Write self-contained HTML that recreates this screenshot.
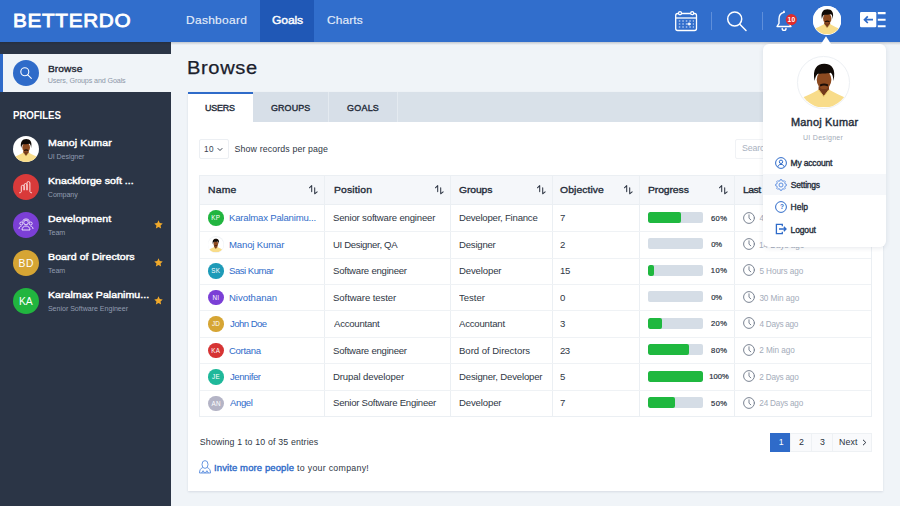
<!DOCTYPE html>
<html lang="en"><head><meta charset="utf-8"><title>Betterdo - Browse</title>
<style>
*{box-sizing:border-box;margin:0;padding:0}
html,body{width:900px;height:506px;overflow:hidden}
body{font-family:"Liberation Sans",sans-serif;background:#f0f4f8;color:#1f2733;position:relative}
.t{position:absolute;white-space:nowrap}
.b{position:absolute}
#hdr{left:0;top:0;width:900px;height:42px;background:#316ecc}
#act{left:259.5px;top:0;width:54.5px;height:42px;background:#2058b6}
#side{left:0;top:42px;width:171px;height:464px;background:#2b3546}
#brw{left:0;top:54px;width:171px;height:38.4px;background:#f0f4f8;border-left:3px solid #2f6bc9}
.circ{position:absolute;width:26px;height:26px;border-radius:50%}
#card{left:188px;top:92.4px;width:695px;height:399px;background:#fff;box-shadow:0 1px 2px rgba(40,60,90,.12)}
#tabs{left:188px;top:92.4px;width:695px;height:30px;background:#d9e1e9}
.tab{position:absolute;top:92.4px;height:30px;background:#d7dfe8;border-right:1px solid #e4eaf0}
#ton{left:188px;top:92px;width:65px;height:30.4px;background:#fff;border-top:2px solid #2f6bc9}
#tbl{left:199px;top:174.5px;width:673px;height:242px;border:1px solid #ebeff3;background:#fff}
#th{left:200px;top:175.5px;width:671px;height:29px;background:#f5f7fa;border-bottom:1px solid #ebeff3}
.vl{position:absolute;top:175.5px;width:1px;height:240px;background:#ebeff3}
.hl{position:absolute;left:200px;width:671px;height:1px;background:#eff2f5}
.av{position:absolute;width:15.5px;height:15.5px;border-radius:50%}
.bar{position:absolute;left:648.3px;width:54.4px;height:11px;border-radius:2px;background:#d5dde6;overflow:hidden}
.bar i{display:block;height:11px;background:#1fb83f;border-radius:2px}
.pg{position:absolute;top:432.5px;height:19.5px;border:1px solid #eef1f4;background:#f9fafc}
#dd{left:762.8px;top:43.5px;width:123px;height:203px;background:#fff;border-radius:6px;box-shadow:0 1px 5px rgba(30,50,80,.11)}
</style></head><body>

<div class="b" id="hdr"></div><div class="b" id="act"></div>
<div class="t" style="left:12.98px;top:9.09px;font-size:18.5px;line-height:24px;color:#fff;letter-spacing:0.613px;-webkit-text-stroke:0.8px #fff;transform:scaleX(1.12);transform-origin:0 0;">BETTERDO</div>
<div class="t" style="left:186.06px;top:12.82px;font-size:11.5px;line-height:15px;color:#e4edfa;letter-spacing:0.282px;-webkit-text-stroke:0.15px #e4edfa;transform:scaleX(1.04);transform-origin:0 0;">Dashboard</div>
<div class="t" style="left:271.62px;top:12.82px;font-size:11.5px;line-height:15px;color:#fff;letter-spacing:-0.15px;-webkit-text-stroke:0.4px #fff;transform:scaleX(1.06);transform-origin:0 0;">Goals</div>
<div class="t" style="left:326.83px;top:12.82px;font-size:11.5px;line-height:15px;color:#e4edfa;letter-spacing:0.089px;-webkit-text-stroke:0.15px #e4edfa;transform:scaleX(1.04);transform-origin:0 0;">Charts</div>
<svg class="t" style="left:674px;top:10px" width="24" height="22" viewBox="0 0 24 22" fill="none" stroke="#fff" stroke-width="1.3"><rect x="1.7" y="3.5" width="20.8" height="17" rx="2"/><path d="M1.7 8H22.5"/><circle cx="6" cy="3.2" r="1.5" fill="#316ecc"/><circle cx="18.2" cy="3.2" r="1.5" fill="#316ecc"/><g stroke="#a9c4ee" stroke-width="1.5" stroke-dasharray="1.5 2"><path d="M4.8 11H20"/><path d="M4.8 14H20"/><path d="M4.8 17H20"/></g><path d="M13.5 14h3.2M15.1 12.4v3.2" stroke-width="1.3"/></svg>
<div class="b" style="left:711px;top:12px;width:1px;height:18px;background:#5f8fda"></div>
<svg class="t" style="left:724.7px;top:9.3px" width="24" height="24" viewBox="0 0 24 24" fill="none" stroke="#fff" stroke-width="1.5" stroke-linecap="round"><circle cx="9.7" cy="10" r="7"/><path d="M14.8 15.2L21 21.5"/></svg>
<div class="b" style="left:762px;top:12px;width:1px;height:18px;background:#5f8fda"></div>
<svg class="t" style="left:775px;top:10px" width="24" height="22" viewBox="0 0 24 22" fill="none" stroke="#fff" stroke-width="1.4" stroke-linejoin="round" stroke-linecap="round"><path d="M9 2.4C5.3 3.1 4 6 4 9v4.3L2 16.5h14L14 13.3V11"/><path d="M7.2 18.5a1.9 1.9 0 0 0 3.8 0"/><path d="M9 1.2v1.2"/><circle cx="16.3" cy="9.6" r="5.6" fill="#e02b2b" stroke="none"/></svg>
<div class="t" style="left:787.5px;top:15.11px;font-size:6.6px;line-height:9px;color:#fff;letter-spacing:0.329px;font-weight:bold;">10</div>
<div class="b" style="left:812.8px;top:6.3px;width:28.3px;height:28.3px;border-radius:50%;background:#fff"></div>
<svg class="t" viewBox="0 0 40 40" width="28.3" height="28.3" style="left:812.8px;top:6.3px"><defs><clipPath id="pa"><circle cx="20" cy="20" r="20"/></clipPath></defs><circle cx="20" cy="20" r="20" fill="#ffffff"/><g clip-path="url(#pa)"><path d="M0 40 L0 33.5 C5 31 11 28.5 16 25.5 L24 25.5 C29 28.5 35 31 40 33.5 L40 40 Z" fill="#f8dc8a"/><path d="M15.8 23 L24.2 23 L24.2 25.5 L20 31 L15.8 25.5 Z" fill="#74391a"/><path d="M15.8 25.5 L20 31 L24.2 25.5" fill="none" stroke="#ecc96c" stroke-width="0.8"/><ellipse cx="20.2" cy="17.6" rx="5.9" ry="7.5" fill="#8c4a20"/><path d="M12.6 18.5 C10.6 9 14.5 4.6 20.3 4.6 C26.6 4.6 30 9 27.8 18.5 C27.6 15 27 13 25.6 11.8 C22 12.8 17.5 12.2 15.3 12.8 C13.7 13.8 13.2 16 12.6 18.5 Z" fill="#110b07"/><path d="M16.8 21.4 Q20.2 19.7 23.6 21.4 L23.2 22.9 Q20.2 21.5 17.2 22.9 Z" fill="#1c0e07"/></g></svg>
<svg class="t" style="left:860px;top:12px" width="26" height="16" viewBox="0 0 26 16"><rect x="0" y="0" width="16.3" height="15.3" rx="1.2" fill="#fff"/><path d="M4.5 7.7h8.5M7.8 4.4L4.5 7.7l3.3 3.3" stroke="#2f6bc9" stroke-width="1.7" fill="none"/><path d="M17.8 1.1H25.6M17.8 7.7H25.6M17.8 14.3H25.6" stroke="#fff" stroke-width="2.1"/></svg>
<div class="b" id="side"></div><div class="b" id="brw"></div>
<div class="b" style="left:0;top:42px;width:900px;height:3px;background:linear-gradient(rgba(10,20,40,.2),rgba(10,20,40,0))"></div>
<div class="circ" style="left:13px;top:60.2px;background:#2f6bc9"></div>
<svg class="t" style="left:19px;top:66.2px" width="14" height="14" viewBox="0 0 14 14" fill="none" stroke="#fff" stroke-width="1.1" stroke-linecap="round"><circle cx="5.8" cy="5.8" r="4"/><path d="M8.8 8.8L12.3 12.3"/></svg>
<div class="t" style="left:47.58px;top:61.97px;font-size:9.9px;line-height:13px;color:#1f2733;letter-spacing:0.086px;-webkit-text-stroke:0.35px #1f2733;transform:scaleX(1.03);transform-origin:0 0;">Browse</div>
<div class="t" style="left:47.65px;top:76.41px;font-size:7.2px;line-height:9px;color:#8d97a8;letter-spacing:-0.138px;">Users, Groups and Goals</div>
<div class="t" style="left:13.47px;top:108.16px;font-size:10.8px;line-height:14px;color:#fff;letter-spacing:-0.113px;font-weight:bold;transform:scaleX(0.9);transform-origin:0 0;">PROFILES</div>
<svg class="t" viewBox="0 0 40 40" width="26" height="26" style="left:13px;top:136px"><defs><clipPath id="pb"><circle cx="20" cy="20" r="20"/></clipPath></defs><circle cx="20" cy="20" r="20" fill="#ffffff"/><g clip-path="url(#pb)"><path d="M0 40 L0 33.5 C5 31 11 28.5 16 25.5 L24 25.5 C29 28.5 35 31 40 33.5 L40 40 Z" fill="#f8dc8a"/><path d="M15.8 23 L24.2 23 L24.2 25.5 L20 31 L15.8 25.5 Z" fill="#74391a"/><path d="M15.8 25.5 L20 31 L24.2 25.5" fill="none" stroke="#ecc96c" stroke-width="0.8"/><ellipse cx="20.2" cy="17.6" rx="5.9" ry="7.5" fill="#8c4a20"/><path d="M12.6 18.5 C10.6 9 14.5 4.6 20.3 4.6 C26.6 4.6 30 9 27.8 18.5 C27.6 15 27 13 25.6 11.8 C22 12.8 17.5 12.2 15.3 12.8 C13.7 13.8 13.2 16 12.6 18.5 Z" fill="#110b07"/><path d="M16.8 21.4 Q20.2 19.7 23.6 21.4 L23.2 22.9 Q20.2 21.5 17.2 22.9 Z" fill="#1c0e07"/></g></svg>
<div class="t" style="left:47.54px;top:136.1px;font-size:9.8px;line-height:13px;color:#fff;letter-spacing:0.078px;-webkit-text-stroke:0.45px #fff;transform:scaleX(1.08);transform-origin:0 0;">Manoj Kumar</div>
<div class="t" style="left:47.7px;top:152.74px;font-size:7.1px;line-height:9px;color:#919cb0;letter-spacing:-0.067px;">UI Designer</div>
<div class="circ" style="left:13px;top:174px;background:#d93a3a"></div>
<svg class="t" style="left:19px;top:179.8px" width="14" height="14" viewBox="0 0 14 14" fill="none" stroke="#fbdcdc" stroke-width="1" stroke-linecap="round" stroke-linejoin="round"><path d="M.6 12.8c1.3 0 1.7-.4 1.7-1.6V6.7a1.4 1.4 0 0 1 2.8 0V9.8M5.1 9.8V5a1.45 1.45 0 0 1 2.9 0V9.8M8 9.8V3a1.45 1.45 0 0 1 2.9 0v8.2c0 1.2.4 1.6 1.7 1.6"/></svg>
<div class="t" style="left:47.54px;top:174.1px;font-size:9.8px;line-height:13px;color:#fff;letter-spacing:0.021px;-webkit-text-stroke:0.45px #fff;transform:scaleX(1.08);transform-origin:0 0;">Knackforge soft ...</div>
<div class="t" style="left:47.85px;top:190.74px;font-size:7.1px;line-height:9px;color:#919cb0;letter-spacing:-0.073px;">Company</div>
<div class="circ" style="left:13px;top:212px;background:#7b3fd6"></div>
<svg class="t" style="left:18px;top:218px" width="16" height="14" viewBox="0 0 16 14" fill="none" stroke="#fff" stroke-width="0.8"><circle cx="8" cy="4.5" r="2.3"/><path d="M4 12c0-2.5 1.7-4 4-4s4 1.5 4 4z"/><circle cx="3.3" cy="5.5" r="1.5"/><circle cx="12.7" cy="5.5" r="1.5"/><path d="M1 11c0-1.8 1-2.8 2.5-2.8M15 11c0-1.8-1-2.8-2.5-2.8"/><path d="M4.5 3.5C5 1.5 6.5 1 8 1s3 .5 3.5 2.5"/></svg>
<div class="t" style="left:47.54px;top:212.1px;font-size:9.8px;line-height:13px;color:#fff;letter-spacing:0.077px;-webkit-text-stroke:0.45px #fff;transform:scaleX(1.08);transform-origin:0 0;">Development</div>
<div class="t" style="left:48.05px;top:228.74px;font-size:7.1px;line-height:9px;color:#919cb0;letter-spacing:-0.049px;">Team</div>
<svg class="t" style="left:153.8px;top:220.4px" width="9" height="9" viewBox="0 0 10 10"><path d="M5 .4l1.4 3 3.3.4-2.4 2.3.6 3.3L5 7.8 2.1 9.4l.6-3.3L.3 3.8l3.3-.4z" fill="#f0a92b"/></svg>
<div class="circ" style="left:13px;top:250px;background:#d6a534"></div>
<div class="t" style="left:18.6px;top:256.53px;font-size:10.3px;line-height:13px;color:#fff;letter-spacing:0.58px;">BD</div>
<div class="t" style="left:47.54px;top:250.1px;font-size:9.8px;line-height:13px;color:#fff;letter-spacing:0.074px;-webkit-text-stroke:0.45px #fff;transform:scaleX(1.08);transform-origin:0 0;">Board of Directors</div>
<div class="t" style="left:48.05px;top:266.74px;font-size:7.1px;line-height:9px;color:#919cb0;letter-spacing:-0.049px;">Team</div>
<svg class="t" style="left:153.8px;top:258.4px" width="9" height="9" viewBox="0 0 10 10"><path d="M5 .4l1.4 3 3.3.4-2.4 2.3.6 3.3L5 7.8 2.1 9.4l.6-3.3L.3 3.8l3.3-.4z" fill="#f0a92b"/></svg>
<div class="circ" style="left:13px;top:288px;background:#21b53f"></div>
<div class="t" style="left:19px;top:294.53px;font-size:10.3px;line-height:13px;color:#fff;letter-spacing:-0.12px;">KA</div>
<div class="t" style="left:47.54px;top:288.1px;font-size:9.8px;line-height:13px;color:#fff;letter-spacing:0.025px;-webkit-text-stroke:0.45px #fff;transform:scaleX(1.08);transform-origin:0 0;">Karalmax Palanimu...</div>
<div class="t" style="left:47.9px;top:304.74px;font-size:7.1px;line-height:9px;color:#919cb0;letter-spacing:-0.03px;">Senior Software Engineer</div>
<svg class="t" style="left:153.8px;top:296.4px" width="9" height="9" viewBox="0 0 10 10"><path d="M5 .4l1.4 3 3.3.4-2.4 2.3.6 3.3L5 7.8 2.1 9.4l.6-3.3L.3 3.8l3.3-.4z" fill="#f0a92b"/></svg>
<div class="t" style="left:186.53px;top:55.79px;font-size:18.8px;line-height:24px;color:#1a202c;letter-spacing:0.581px;-webkit-text-stroke:0.25px #1a202c;transform:scaleX(1.07);transform-origin:0 0;">Browse</div>
<div class="b" id="card"></div><div class="b" id="tabs"></div>
<div class="tab" style="left:253px;width:75.5px"></div><div class="tab" style="left:328.5px;width:69px"></div><div class="b" id="ton"></div>
<div class="t" style="left:204.93px;top:102.08px;font-size:9.3px;line-height:12px;color:#232b38;letter-spacing:-0.209px;-webkit-text-stroke:0.4px #232b38;transform:scaleX(0.96);transform-origin:0 0;">USERS</div>
<div class="t" style="left:270.77px;top:102.08px;font-size:9.3px;line-height:12px;color:#232b38;letter-spacing:0.109px;-webkit-text-stroke:0.4px #232b38;transform:scaleX(0.96);transform-origin:0 0;">GROUPS</div>
<div class="t" style="left:347.07px;top:102.08px;font-size:9.3px;line-height:12px;color:#232b38;letter-spacing:0.275px;-webkit-text-stroke:0.4px #232b38;transform:scaleX(0.96);transform-origin:0 0;">GOALS</div>
<div class="b" style="left:199px;top:139px;width:30px;height:20px;border:1px solid #eceff3;border-radius:2px;background:#fff"></div>
<div class="t" style="left:204px;top:144.16px;font-size:8.2px;line-height:11px;color:#3a4352;letter-spacing:0.39px;">10</div>
<svg class="t" style="left:217px;top:147px" width="6" height="5" viewBox="0 0 6 5" fill="none" stroke="#3a4352" stroke-width="1"><path d="M.7 1.2L3 3.5 5.3 1.2"/></svg>
<div class="t" style="left:234.6px;top:144.15px;font-size:8.8px;line-height:11px;color:#2f3745;letter-spacing:0.123px;">Show records per page</div>
<div class="b" style="left:734.7px;top:139px;width:138px;height:19.5px;border:1px solid #f0f2f5;border-radius:2px;background:#fff"></div>
<div class="t" style="left:742.1px;top:143.25px;font-size:8.8px;line-height:11px;color:#aab2bf;letter-spacing:-0.188px;">Search</div>
<div class="b" id="tbl"></div><div class="b" id="th"></div>
<div class="vl" style="left:324px"></div>
<div class="vl" style="left:450px"></div>
<div class="vl" style="left:552px"></div>
<div class="vl" style="left:639px"></div>
<div class="vl" style="left:734px"></div>
<div class="hl" style="top:231px"></div>
<div class="hl" style="top:258px"></div>
<div class="hl" style="top:284px"></div>
<div class="hl" style="top:310px"></div>
<div class="hl" style="top:337px"></div>
<div class="hl" style="top:363px"></div>
<div class="hl" style="top:390px"></div>
<div class="t" style="left:207.89px;top:183.87px;font-size:9.6px;line-height:12px;color:#232b38;letter-spacing:0.177px;-webkit-text-stroke:0.33px #232b38;transform:scaleX(1.08);transform-origin:0 0;">Name</div>
<svg class="t" style="left:309.3px;top:185px" width="9" height="10" viewBox="0 0 9 10" fill="none" stroke="#2f3745" stroke-width="1.05" stroke-linecap="round" stroke-linejoin="round"><path d="M2.7 6.6V.6L.4 2.8M5.7 2.8v6l2.4-1.9"/></svg>
<div class="t" style="left:333.59px;top:183.87px;font-size:9.6px;line-height:12px;color:#232b38;letter-spacing:0.154px;-webkit-text-stroke:0.33px #232b38;transform:scaleX(1.08);transform-origin:0 0;">Position</div>
<svg class="t" style="left:435.3px;top:185px" width="9" height="10" viewBox="0 0 9 10" fill="none" stroke="#2f3745" stroke-width="1.05" stroke-linecap="round" stroke-linejoin="round"><path d="M2.7 6.6V.6L.4 2.8M5.7 2.8v6l2.4-1.9"/></svg>
<div class="t" style="left:459.21px;top:183.87px;font-size:9.6px;line-height:12px;color:#232b38;letter-spacing:-0.109px;-webkit-text-stroke:0.33px #232b38;transform:scaleX(1.08);transform-origin:0 0;">Groups</div>
<svg class="t" style="left:537px;top:185px" width="9" height="10" viewBox="0 0 9 10" fill="none" stroke="#2f3745" stroke-width="1.05" stroke-linecap="round" stroke-linejoin="round"><path d="M2.7 6.6V.6L.4 2.8M5.7 2.8v6l2.4-1.9"/></svg>
<div class="t" style="left:560.21px;top:183.87px;font-size:9.6px;line-height:12px;color:#232b38;letter-spacing:0.08px;-webkit-text-stroke:0.33px #232b38;transform:scaleX(1.08);transform-origin:0 0;">Objective</div>
<svg class="t" style="left:623.7px;top:185px" width="9" height="10" viewBox="0 0 9 10" fill="none" stroke="#2f3745" stroke-width="1.05" stroke-linecap="round" stroke-linejoin="round"><path d="M2.7 6.6V.6L.4 2.8M5.7 2.8v6l2.4-1.9"/></svg>
<div class="t" style="left:648.19px;top:183.87px;font-size:9.6px;line-height:12px;color:#232b38;letter-spacing:-0.086px;-webkit-text-stroke:0.33px #232b38;transform:scaleX(1.08);transform-origin:0 0;">Progress</div>
<svg class="t" style="left:719.3px;top:185px" width="9" height="10" viewBox="0 0 9 10" fill="none" stroke="#2f3745" stroke-width="1.05" stroke-linecap="round" stroke-linejoin="round"><path d="M2.7 6.6V.6L.4 2.8M5.7 2.8v6l2.4-1.9"/></svg>
<div class="t" style="left:742.89px;top:183.87px;font-size:9.6px;line-height:12px;color:#232b38;letter-spacing:-0.437px;-webkit-text-stroke:0.33px #232b38;transform:scaleX(1.08);transform-origin:0 0;">Last</div>
<div class="av" style="left:208px;top:210.45px;background:#21b53f"></div>
<div class="t" style="left:211.3px;top:214.42px;font-size:6.3px;line-height:8px;color:#fff;letter-spacing:0.3px;">KP</div>
<div class="t" style="left:229.03px;top:212.28px;font-size:9.3px;line-height:12px;color:#2f6bc9;letter-spacing:-0.2px;transform:scaleX(1.03);transform-origin:0 0;">Karalmax Palanimu...</div>
<div class="t" style="left:333.39px;top:212.28px;font-size:9.3px;line-height:12px;color:#2f3745;letter-spacing:-0.17px;transform:scaleX(1.03);transform-origin:0 0;">Senior software engineer</div>
<div class="t" style="left:458.63px;top:212.28px;font-size:9.3px;line-height:12px;color:#2f3745;letter-spacing:-0.216px;transform:scaleX(1.03);transform-origin:0 0;">Developer, Finance</div>
<div class="t" style="left:560.34px;top:212.28px;font-size:9.3px;line-height:12px;color:#2f3745;letter-spacing:0px;transform:scaleX(1.03);transform-origin:0 0;">7</div>
<div class="bar" style="top:212px"><i style="width:32.7px"></i></div>
<div class="t" style="left:711.05px;top:213.57px;font-size:7.6px;line-height:10px;color:#2a3240;letter-spacing:0.348px;-webkit-text-stroke:0.2px #2a3240;">60%</div>
<svg class="t" style="left:742.5px;top:211.5px" width="12" height="12" viewBox="0 0 12 12" fill="none" stroke="#7a8392" stroke-width="1" stroke-linecap="round"><circle cx="6" cy="6" r="5.4"/><path d="M6 2.8v3.4l1.8 1.6"/></svg>
<div class="t" style="left:759.55px;top:213.16px;font-size:8.2px;line-height:11px;color:#a4acba;letter-spacing:-0.247px;">4 Days ago</div>
<div class="av" style="left:207.5px;top:236.4px;width:16.5px;height:16.5px;background:#eff2f5"></div>
<svg class="t" viewBox="0 0 40 40" width="15.5" height="15.5" style="left:208px;top:236.89999999999998px"><defs><clipPath id="pc"><circle cx="20" cy="20" r="20"/></clipPath></defs><circle cx="20" cy="20" r="20" fill="#ffffff"/><g clip-path="url(#pc)"><path d="M0 40 L0 33.5 C5 31 11 28.5 16 25.5 L24 25.5 C29 28.5 35 31 40 33.5 L40 40 Z" fill="#f8dc8a"/><path d="M15.8 23 L24.2 23 L24.2 25.5 L20 31 L15.8 25.5 Z" fill="#74391a"/><path d="M15.8 25.5 L20 31 L24.2 25.5" fill="none" stroke="#ecc96c" stroke-width="0.8"/><ellipse cx="20.2" cy="17.6" rx="5.9" ry="7.5" fill="#8c4a20"/><path d="M12.6 18.5 C10.6 9 14.5 4.6 20.3 4.6 C26.6 4.6 30 9 27.8 18.5 C27.6 15 27 13 25.6 11.8 C22 12.8 17.5 12.2 15.3 12.8 C13.7 13.8 13.2 16 12.6 18.5 Z" fill="#110b07"/><path d="M16.8 21.4 Q20.2 19.7 23.6 21.4 L23.2 22.9 Q20.2 21.5 17.2 22.9 Z" fill="#1c0e07"/></g></svg>
<div class="t" style="left:229.03px;top:238.73px;font-size:9.3px;line-height:12px;color:#2f6bc9;letter-spacing:-0.15px;transform:scaleX(1.03);transform-origin:0 0;">Manoj Kumar</div>
<div class="t" style="left:333.08px;top:238.73px;font-size:9.3px;line-height:12px;color:#2f3745;letter-spacing:-0.318px;transform:scaleX(1.03);transform-origin:0 0;">UI Designer, QA</div>
<div class="t" style="left:458.63px;top:238.73px;font-size:9.3px;line-height:12px;color:#2f3745;letter-spacing:-0.21px;transform:scaleX(1.03);transform-origin:0 0;">Designer</div>
<div class="t" style="left:560.34px;top:238.73px;font-size:9.3px;line-height:12px;color:#2f3745;letter-spacing:0px;transform:scaleX(1.03);transform-origin:0 0;">2</div>
<div class="bar" style="top:238.45px"><i style="width:0px"></i></div>
<div class="t" style="left:711.15px;top:240.02px;font-size:7.6px;line-height:10px;color:#2a3240;letter-spacing:-0.177px;-webkit-text-stroke:0.2px #2a3240;">0%</div>
<svg class="t" style="left:742.5px;top:237.95px" width="12" height="12" viewBox="0 0 12 12" fill="none" stroke="#7a8392" stroke-width="1" stroke-linecap="round"><circle cx="6" cy="6" r="5.4"/><path d="M6 2.8v3.4l1.8 1.6"/></svg>
<div class="t" style="left:759.1px;top:239.61px;font-size:8.2px;line-height:11px;color:#a4acba;letter-spacing:-0.083px;">14 Days ago</div>
<div class="av" style="left:208px;top:263.35px;background:#1e9bb8"></div>
<div class="t" style="left:211.3px;top:267.32px;font-size:6.3px;line-height:8px;color:#fff;letter-spacing:0.3px;">SK</div>
<div class="t" style="left:229.39px;top:265.18px;font-size:9.3px;line-height:12px;color:#2f6bc9;letter-spacing:-0.48px;transform:scaleX(1.03);transform-origin:0 0;">Sasi Kumar</div>
<div class="t" style="left:333.39px;top:265.18px;font-size:9.3px;line-height:12px;color:#2f3745;letter-spacing:-0.223px;transform:scaleX(1.03);transform-origin:0 0;">Software engineer</div>
<div class="t" style="left:458.63px;top:265.18px;font-size:9.3px;line-height:12px;color:#2f3745;letter-spacing:-0.138px;transform:scaleX(1.03);transform-origin:0 0;">Developer</div>
<div class="t" style="left:560.08px;top:265.18px;font-size:9.3px;line-height:12px;color:#2f3745;letter-spacing:-0.34px;transform:scaleX(1.03);transform-origin:0 0;">15</div>
<div class="bar" style="top:264.9px"><i style="width:6px"></i></div>
<div class="t" style="left:710.85px;top:266.47px;font-size:7.6px;line-height:10px;color:#2a3240;letter-spacing:0.448px;-webkit-text-stroke:0.2px #2a3240;">10%</div>
<svg class="t" style="left:742.5px;top:264.4px" width="12" height="12" viewBox="0 0 12 12" fill="none" stroke="#7a8392" stroke-width="1" stroke-linecap="round"><circle cx="6" cy="6" r="5.4"/><path d="M6 2.8v3.4l1.8 1.6"/></svg>
<div class="t" style="left:759.4px;top:266.06px;font-size:8.2px;line-height:11px;color:#a4acba;letter-spacing:-0.076px;">5 Hours ago</div>
<div class="av" style="left:208px;top:289.8px;background:#7b3fd6"></div>
<div class="t" style="left:212.48px;top:293.77px;font-size:6.3px;line-height:8px;color:#fff;letter-spacing:0.3px;">NI</div>
<div class="t" style="left:229.03px;top:291.63px;font-size:9.3px;line-height:12px;color:#2f6bc9;letter-spacing:-0.043px;transform:scaleX(1.03);transform-origin:0 0;">Nivothanan</div>
<div class="t" style="left:333.39px;top:291.63px;font-size:9.3px;line-height:12px;color:#2f3745;letter-spacing:-0.08px;transform:scaleX(1.03);transform-origin:0 0;">Software tester</div>
<div class="t" style="left:459.19px;top:291.63px;font-size:9.3px;line-height:12px;color:#2f3745;letter-spacing:-0.025px;transform:scaleX(1.03);transform-origin:0 0;">Tester</div>
<div class="t" style="left:560.44px;top:291.63px;font-size:9.3px;line-height:12px;color:#2f3745;letter-spacing:0px;transform:scaleX(1.03);transform-origin:0 0;">0</div>
<div class="bar" style="top:291.35px"><i style="width:0px"></i></div>
<div class="t" style="left:711.15px;top:292.92px;font-size:7.6px;line-height:10px;color:#2a3240;letter-spacing:-0.177px;-webkit-text-stroke:0.2px #2a3240;">0%</div>
<svg class="t" style="left:742.5px;top:290.85px" width="12" height="12" viewBox="0 0 12 12" fill="none" stroke="#7a8392" stroke-width="1" stroke-linecap="round"><circle cx="6" cy="6" r="5.4"/><path d="M6 2.8v3.4l1.8 1.6"/></svg>
<div class="t" style="left:759.4px;top:292.51px;font-size:8.2px;line-height:11px;color:#a4acba;letter-spacing:-0.073px;">30 Min ago</div>
<div class="av" style="left:208px;top:316.25px;background:#d6a534"></div>
<div class="t" style="left:211.88px;top:320.22px;font-size:6.3px;line-height:8px;color:#fff;letter-spacing:0.3px;">JD</div>
<div class="t" style="left:229.7px;top:318.08px;font-size:9.3px;line-height:12px;color:#2f6bc9;letter-spacing:-0.53px;transform:scaleX(1.03);transform-origin:0 0;">John Doe</div>
<div class="t" style="left:333.8px;top:318.08px;font-size:9.3px;line-height:12px;color:#2f3745;letter-spacing:-0.237px;transform:scaleX(1.03);transform-origin:0 0;">Accountant</div>
<div class="t" style="left:459.4px;top:318.08px;font-size:9.3px;line-height:12px;color:#2f3745;letter-spacing:-0.193px;transform:scaleX(1.03);transform-origin:0 0;">Accountant</div>
<div class="t" style="left:560.44px;top:318.08px;font-size:9.3px;line-height:12px;color:#2f3745;letter-spacing:0px;transform:scaleX(1.03);transform-origin:0 0;">3</div>
<div class="bar" style="top:317.8px"><i style="width:14px"></i></div>
<div class="t" style="left:711.05px;top:319.37px;font-size:7.6px;line-height:10px;color:#2a3240;letter-spacing:0.348px;-webkit-text-stroke:0.2px #2a3240;">20%</div>
<svg class="t" style="left:742.5px;top:317.3px" width="12" height="12" viewBox="0 0 12 12" fill="none" stroke="#7a8392" stroke-width="1" stroke-linecap="round"><circle cx="6" cy="6" r="5.4"/><path d="M6 2.8v3.4l1.8 1.6"/></svg>
<div class="t" style="left:759.55px;top:318.96px;font-size:8.2px;line-height:11px;color:#a4acba;letter-spacing:-0.302px;">4 Days ago</div>
<div class="av" style="left:208px;top:342.7px;background:#d63434"></div>
<div class="t" style="left:211.15px;top:346.67px;font-size:6.3px;line-height:8px;color:#fff;letter-spacing:0.3px;">KA</div>
<div class="t" style="left:229.34px;top:344.53px;font-size:9.3px;line-height:12px;color:#2f6bc9;letter-spacing:-0.314px;transform:scaleX(1.03);transform-origin:0 0;">Cortana</div>
<div class="t" style="left:333.39px;top:344.53px;font-size:9.3px;line-height:12px;color:#2f3745;letter-spacing:-0.223px;transform:scaleX(1.03);transform-origin:0 0;">Software engineer</div>
<div class="t" style="left:458.63px;top:344.53px;font-size:9.3px;line-height:12px;color:#2f3745;letter-spacing:-0.042px;transform:scaleX(1.03);transform-origin:0 0;">Bord of Directors</div>
<div class="t" style="left:560.34px;top:344.53px;font-size:9.3px;line-height:12px;color:#2f3745;letter-spacing:-0.59px;transform:scaleX(1.03);transform-origin:0 0;">23</div>
<div class="bar" style="top:344.25px"><i style="width:40.5px"></i></div>
<div class="t" style="left:711.1px;top:345.82px;font-size:7.6px;line-height:10px;color:#2a3240;letter-spacing:0.323px;-webkit-text-stroke:0.2px #2a3240;">80%</div>
<svg class="t" style="left:742.5px;top:343.75px" width="12" height="12" viewBox="0 0 12 12" fill="none" stroke="#7a8392" stroke-width="1" stroke-linecap="round"><circle cx="6" cy="6" r="5.4"/><path d="M6 2.8v3.4l1.8 1.6"/></svg>
<div class="t" style="left:759.3px;top:345.41px;font-size:8.2px;line-height:11px;color:#a4acba;letter-spacing:-0.063px;">2 Min ago</div>
<div class="av" style="left:208px;top:369.15px;background:#1fb89a"></div>
<div class="t" style="left:212.02px;top:373.12px;font-size:6.3px;line-height:8px;color:#fff;letter-spacing:0.3px;">JE</div>
<div class="t" style="left:229.7px;top:370.98px;font-size:9.3px;line-height:12px;color:#2f6bc9;letter-spacing:-0.433px;transform:scaleX(1.03);transform-origin:0 0;">Jennifer</div>
<div class="t" style="left:333.03px;top:370.98px;font-size:9.3px;line-height:12px;color:#2f3745;letter-spacing:-0.118px;transform:scaleX(1.03);transform-origin:0 0;">Drupal developer</div>
<div class="t" style="left:458.63px;top:370.98px;font-size:9.3px;line-height:12px;color:#2f3745;letter-spacing:-0.176px;transform:scaleX(1.03);transform-origin:0 0;">Designer, Developer</div>
<div class="t" style="left:560.44px;top:370.98px;font-size:9.3px;line-height:12px;color:#2f3745;letter-spacing:0px;transform:scaleX(1.03);transform-origin:0 0;">5</div>
<div class="bar" style="top:370.7px"><i style="width:54.4px"></i></div>
<div class="t" style="left:709.15px;top:372.27px;font-size:7.6px;line-height:10px;color:#2a3240;letter-spacing:0.057px;-webkit-text-stroke:0.2px #2a3240;">100%</div>
<svg class="t" style="left:742.5px;top:370.2px" width="12" height="12" viewBox="0 0 12 12" fill="none" stroke="#7a8392" stroke-width="1" stroke-linecap="round"><circle cx="6" cy="6" r="5.4"/><path d="M6 2.8v3.4l1.8 1.6"/></svg>
<div class="t" style="left:759.3px;top:371.86px;font-size:8.2px;line-height:11px;color:#a4acba;letter-spacing:-0.219px;">2 Days ago</div>
<div class="av" style="left:208px;top:395.6px;background:#b4b4c6"></div>
<div class="t" style="left:211.47px;top:399.57px;font-size:6.3px;line-height:8px;color:#fff;letter-spacing:0.3px;">AN</div>
<div class="t" style="left:229.8px;top:397.43px;font-size:9.3px;line-height:12px;color:#2f6bc9;letter-spacing:-0.404px;transform:scaleX(1.03);transform-origin:0 0;">Angel</div>
<div class="t" style="left:333.39px;top:397.43px;font-size:9.3px;line-height:12px;color:#2f3745;letter-spacing:-0.249px;transform:scaleX(1.03);transform-origin:0 0;">Senior Software Engineer</div>
<div class="t" style="left:458.63px;top:397.43px;font-size:9.3px;line-height:12px;color:#2f3745;letter-spacing:-0.138px;transform:scaleX(1.03);transform-origin:0 0;">Developer</div>
<div class="t" style="left:560.34px;top:397.43px;font-size:9.3px;line-height:12px;color:#2f3745;letter-spacing:0px;transform:scaleX(1.03);transform-origin:0 0;">7</div>
<div class="bar" style="top:397.15px"><i style="width:27px"></i></div>
<div class="t" style="left:711.1px;top:398.72px;font-size:7.6px;line-height:10px;color:#2a3240;letter-spacing:0.323px;-webkit-text-stroke:0.2px #2a3240;">50%</div>
<svg class="t" style="left:742.5px;top:396.65px" width="12" height="12" viewBox="0 0 12 12" fill="none" stroke="#7a8392" stroke-width="1" stroke-linecap="round"><circle cx="6" cy="6" r="5.4"/><path d="M6 2.8v3.4l1.8 1.6"/></svg>
<div class="t" style="left:759.3px;top:398.31px;font-size:8.2px;line-height:11px;color:#a4acba;letter-spacing:-0.203px;">24 Days ago</div>
<div class="t" style="left:199.8px;top:436.75px;font-size:8.8px;line-height:11px;color:#2f3745;letter-spacing:0.161px;">Showing 1 to 10 of 35 entries</div>
<svg class="t" style="left:199px;top:460px" width="12" height="14" viewBox="0 0 12 14" fill="none" stroke="#4f85dc" stroke-width="0.85" stroke-linejoin="round"><ellipse cx="6" cy="4.5" rx="3" ry="3.9"/><path d="M3.7 7.6C1.7 8.3.5 10 .5 13h11c0-3-1.2-4.7-3.2-5.4M2.6 13l1.5-2.3L5.6 13M6.4 13l1.5-2.3L9.4 13"/></svg>
<div class="t" style="left:213.84px;top:463.25px;font-size:8.8px;line-height:11px;color:#2f6bc9;letter-spacing:0.101px;-webkit-text-stroke:0.35px #2f6bc9;transform:scaleX(1.08);transform-origin:0 0;">Invite more people</div>
<div class="t" style="left:297.1px;top:463.25px;font-size:8.8px;line-height:11px;color:#2f3745;letter-spacing:0.28px;">to your company!</div>
<div class="pg" style="left:770px;width:20.5px;background:#2f6bc9;border-color:#2f6bc9;"></div>
<div class="pg" style="left:790px;width:22px;"></div>
<div class="pg" style="left:811px;width:22px;"></div>
<div class="pg" style="left:832px;width:40px;"></div>
<div class="t" style="left:778.75px;top:436.95px;font-size:8.8px;line-height:11px;color:#fff;letter-spacing:0px;">1</div>
<div class="t" style="left:798.9px;top:436.95px;font-size:8.8px;line-height:11px;color:#2a3240;letter-spacing:0px;">2</div>
<div class="t" style="left:819.9px;top:436.95px;font-size:8.8px;line-height:11px;color:#2a3240;letter-spacing:0px;">3</div>
<div class="t" style="left:839px;top:436.95px;font-size:8.8px;line-height:11px;color:#2a3240;letter-spacing:0.15px;">Next</div>
<svg class="t" style="left:861.5px;top:439px" width="5" height="7" viewBox="0 0 5 7" fill="none" stroke="#2a3240" stroke-width="1"><path d="M1 .8L3.8 3.5 1 6.2"/></svg>
<div class="b" id="dd"></div>
<svg class="t" style="left:821.3px;top:36px" width="10" height="8" viewBox="0 0 10 8"><path d="M0 8L5 .2 10 8z" fill="#fff"/></svg>
<div class="b" style="left:797px;top:56.2px;width:52.6px;height:52.6px;border-radius:50%;border:1px solid #edf0f4;background:#fff"></div>
<svg class="t" viewBox="0 0 40 40" width="49.6" height="49.6" style="left:798.5px;top:57.7px"><defs><clipPath id="pd"><circle cx="20" cy="20" r="20"/></clipPath></defs><circle cx="20" cy="20" r="20" fill="#ffffff"/><g clip-path="url(#pd)"><path d="M0 40 L0 33.5 C5 31 11 28.5 16 25.5 L24 25.5 C29 28.5 35 31 40 33.5 L40 40 Z" fill="#f8dc8a"/><path d="M15.8 23 L24.2 23 L24.2 25.5 L20 31 L15.8 25.5 Z" fill="#74391a"/><path d="M15.8 25.5 L20 31 L24.2 25.5" fill="none" stroke="#ecc96c" stroke-width="0.8"/><ellipse cx="20.2" cy="17.6" rx="5.9" ry="7.5" fill="#8c4a20"/><path d="M12.6 18.5 C10.6 9 14.5 4.6 20.3 4.6 C26.6 4.6 30 9 27.8 18.5 C27.6 15 27 13 25.6 11.8 C22 12.8 17.5 12.2 15.3 12.8 C13.7 13.8 13.2 16 12.6 18.5 Z" fill="#110b07"/><path d="M16.8 21.4 Q20.2 19.7 23.6 21.4 L23.2 22.9 Q20.2 21.5 17.2 22.9 Z" fill="#1c0e07"/></g></svg>
<div class="t" style="left:791.24px;top:116.17px;font-size:10.2px;line-height:13px;color:#262e3b;letter-spacing:0.216px;-webkit-text-stroke:0.4px #262e3b;transform:scaleX(1.07);transform-origin:0 0;">Manoj Kumar</div>
<div class="t" style="left:803px;top:132.97px;font-size:7px;line-height:9px;color:#a3abb8;letter-spacing:0.292px;">UI Designer</div>
<div class="b" style="left:762.8px;top:174.3px;width:123px;height:21px;background:#f5f7fa"></div>
<svg class="t" style="left:775px;top:157px" width="12" height="12" viewBox="0 0 12 12" fill="none" stroke="#2f6bc9" stroke-width="1"><circle cx="6" cy="6" r="5.4"/><circle cx="6" cy="4.8" r="1.7"/><path d="M2.8 9.9c.3-1.8 1.6-2.5 3.2-2.5s2.9.7 3.2 2.5"/></svg>
<div class="t" style="left:790.55px;top:158.45px;font-size:8.5px;line-height:11px;color:#262e3b;letter-spacing:-0.172px;-webkit-text-stroke:0.35px #262e3b;">My account</div>
<svg class="t" style="left:775px;top:178.8px" width="12" height="12" viewBox="0 0 12 12" fill="none" stroke="#2f6bc9" stroke-width="1"><circle cx="6" cy="6" r="2" stroke="#5f90e2"/><path stroke="#5f90e2" stroke-linejoin="round" d="M5.28 0.65L6.72 0.65L7.1 1.84L8.16 2.28L9.28 1.71L10.29 2.72L9.72 3.84L10.16 4.9L11.35 5.28L11.35 6.72L10.16 7.1L9.72 8.16L10.29 9.28L9.28 10.29L8.16 9.72L7.1 10.16L6.72 11.35L5.28 11.35L4.9 10.16L3.84 9.72L2.72 10.29L1.71 9.28L2.28 8.16L1.84 7.1L0.65 6.72L0.65 5.28L1.84 4.9L2.28 3.84L1.71 2.72L2.72 1.71L3.84 2.28L4.9 1.84z"/></svg>
<div class="t" style="left:790.85px;top:179.75px;font-size:8.5px;line-height:11px;color:#262e3b;letter-spacing:-0.209px;-webkit-text-stroke:0.35px #262e3b;">Settings</div>
<svg class="t" style="left:775px;top:200.6px" width="12" height="12" viewBox="0 0 12 12" fill="none" stroke="#2f6bc9" stroke-width="1"><circle cx="6" cy="6" r="5.4"/></svg>
<div class="t" style="left:790.55px;top:201.55px;font-size:8.5px;line-height:11px;color:#262e3b;letter-spacing:-0.001px;-webkit-text-stroke:0.35px #262e3b;">Help</div>
<svg class="t" style="left:775px;top:223.4px" width="12" height="12" viewBox="0 0 12 12" fill="none" stroke="#2f6bc9" stroke-width="1"><path d="M7.3 3.2V1.3H1.4v9.4h5.9V8.8" stroke-width="1.3"/><path d="M4 6h7M8.8 3.8L11 6 8.8 8.2" stroke-width="1.3"/></svg>
<div class="t" style="left:790.55px;top:224.85px;font-size:8.5px;line-height:11px;color:#262e3b;letter-spacing:-0.137px;-webkit-text-stroke:0.35px #262e3b;">Logout</div>
<div class="t" style="left:780.05px;top:202.75px;font-size:6.5px;line-height:8px;color:#2f6bc9;letter-spacing:0px;font-weight:bold;">?</div>
</body></html>
